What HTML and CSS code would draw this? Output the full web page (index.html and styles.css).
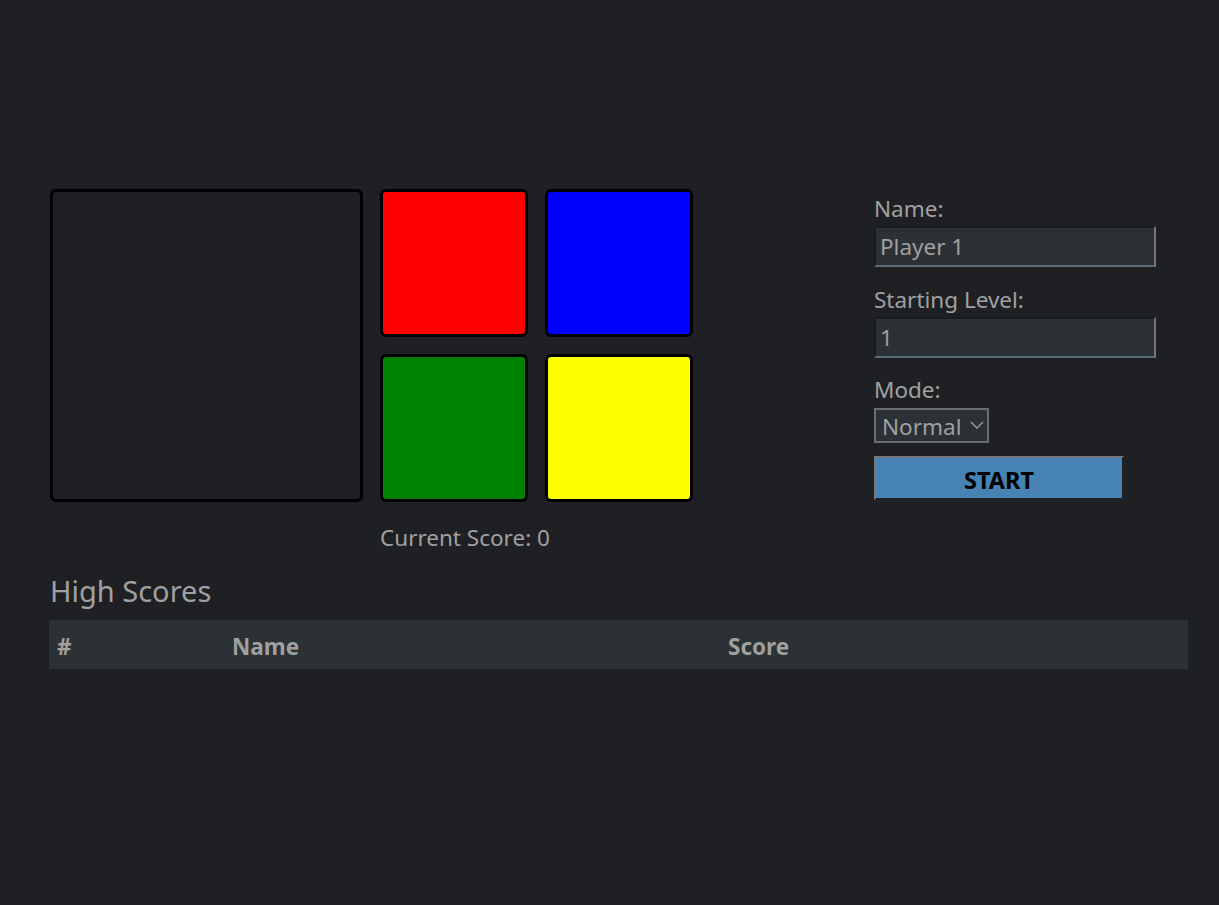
FILE: index.html
```html
<!DOCTYPE html>
<html>
<head>
<meta charset="utf-8">
<link rel="stylesheet" href="styles.css">
</head>
<body>
<div class="page">
  <div class="top">
    <div class="game">
      <div class="display"></div>
      <div class="pad-col">
        <div class="pads">
          <div class="pad red"></div>
          <div class="pad blue"></div>
          <div class="pad green"></div>
          <div class="pad yellow"></div>
        </div>
        <div class="score">Current Score: 0</div>
      </div>
    </div>
    <div class="controls">
      <label class="lbl">Name:</label>
      <input class="field" type="text" value="Player 1">
      <label class="lbl">Starting Level:</label>
      <input class="field" type="text" value="1">
      <label class="lbl">Mode:</label>
      <div class="select"><span>Normal</span><svg class="chev" width="14" height="8" viewBox="0 0 14 8"><path d="M1 1 L7 7 L13 1" fill="none" stroke="#a0a0a0" stroke-width="1.3"/></svg></div>
      <button class="start">START</button>
    </div>
  </div>
  <h2 class="hs">High Scores</h2>
  <table class="scores">
    <thead>
      <tr><th class="c1">#</th><th class="c2">Name</th><th class="c3">Score</th></tr>
    </thead>
  </table>
</div>
</body>
</html>
```
FILE: styles.css
```css
html, body {
  margin: 0;
  background: #1e2023;
  font-family: "Noto Sans", "Open Sans", sans-serif;
  color: #a0a0a0;
}
.page {
  padding: 189px 31px 0 49px;
}
.top {
  display: flex;
  align-items: flex-start;
}
.game {
  display: flex;
  gap: 17px;
  padding-left: 1px;
}
.display {
  width: 307px;
  height: 307px;
  border: 3px solid #000;
  border-radius: 6px;
}
.pad-col {
  display: flex;
  flex-direction: column;
}
.pads {
  display: grid;
  grid-template-columns: 148px 148px;
  grid-auto-rows: 148px;
  gap: 17px;
}
.pad {
  border: 3px solid #000;
  border-radius: 6px;
}
.red { background: #ff0000; }
.blue { background: #0000ff; }
.green { background: #008000; }
.yellow { background: #ffff00; }
.score {
  font-size: 22.5px;
  margin-top: 22px;
  line-height: 28px;
}
.controls {
  margin-left: 181px;
  margin-top: 5px;
  width: 282px;
  display: flex;
  flex-direction: column;
  align-items: flex-start;
}
.lbl {
  font-size: 22.5px;
  line-height: 30px;
  height: 30px;
}
.field {
  box-sizing: border-box;
  width: 282px;
  height: 41px;
  margin: 2px 0 18px;
  background: #2b3134;
  border: 2px solid;
  border-color: #1a1c1e #787878 #5a6b76 #1a1c1e;
  color: #a0a0a0;
  font-family: inherit;
  font-size: 22.5px;
  padding: 0 4px;
  outline: none;
}
.field + .lbl + .field { margin-bottom: 17px; }
.select {
  box-sizing: border-box;
  height: 35px;
  width: 115px;
  margin-top: 3px;
  background: #2b3134;
  border: 2px solid #6a6e71;
  font-size: 22.5px;
  line-height: 30px;
  padding: 2px 0 0 6px;
  display: flex;
  align-items: center;
  gap: 9px;
  white-space: nowrap;
}
.chev { margin-top: -4px; }
.start {
  margin-top: 13px;
  box-sizing: border-box;
  width: 250px;
  height: 44px;
  background: #4682b4;
  border: 2px solid;
  border-color: #787878 #1e2023 #1e2023 #787878;
  font-family: inherit;
  font-weight: 700;
  font-size: 23.5px;
  color: #000;
  padding: 3px 0 0;
}
.hs {
  margin: 24px 0 14px 1px;
  font-size: 29px;
  font-weight: 400;
  line-height: 30px;
}
.scores {
  width: 100%;
  border-collapse: collapse;
  background: #2b3134;
}
.scores th {
  text-align: left;
  font-size: 22.5px;
  font-weight: 700;
  height: 49px;
  padding: 4px 8px 0;
  box-sizing: border-box;
}
.c1 { width: 175px; }
.c2 { width: 496px; }
```
